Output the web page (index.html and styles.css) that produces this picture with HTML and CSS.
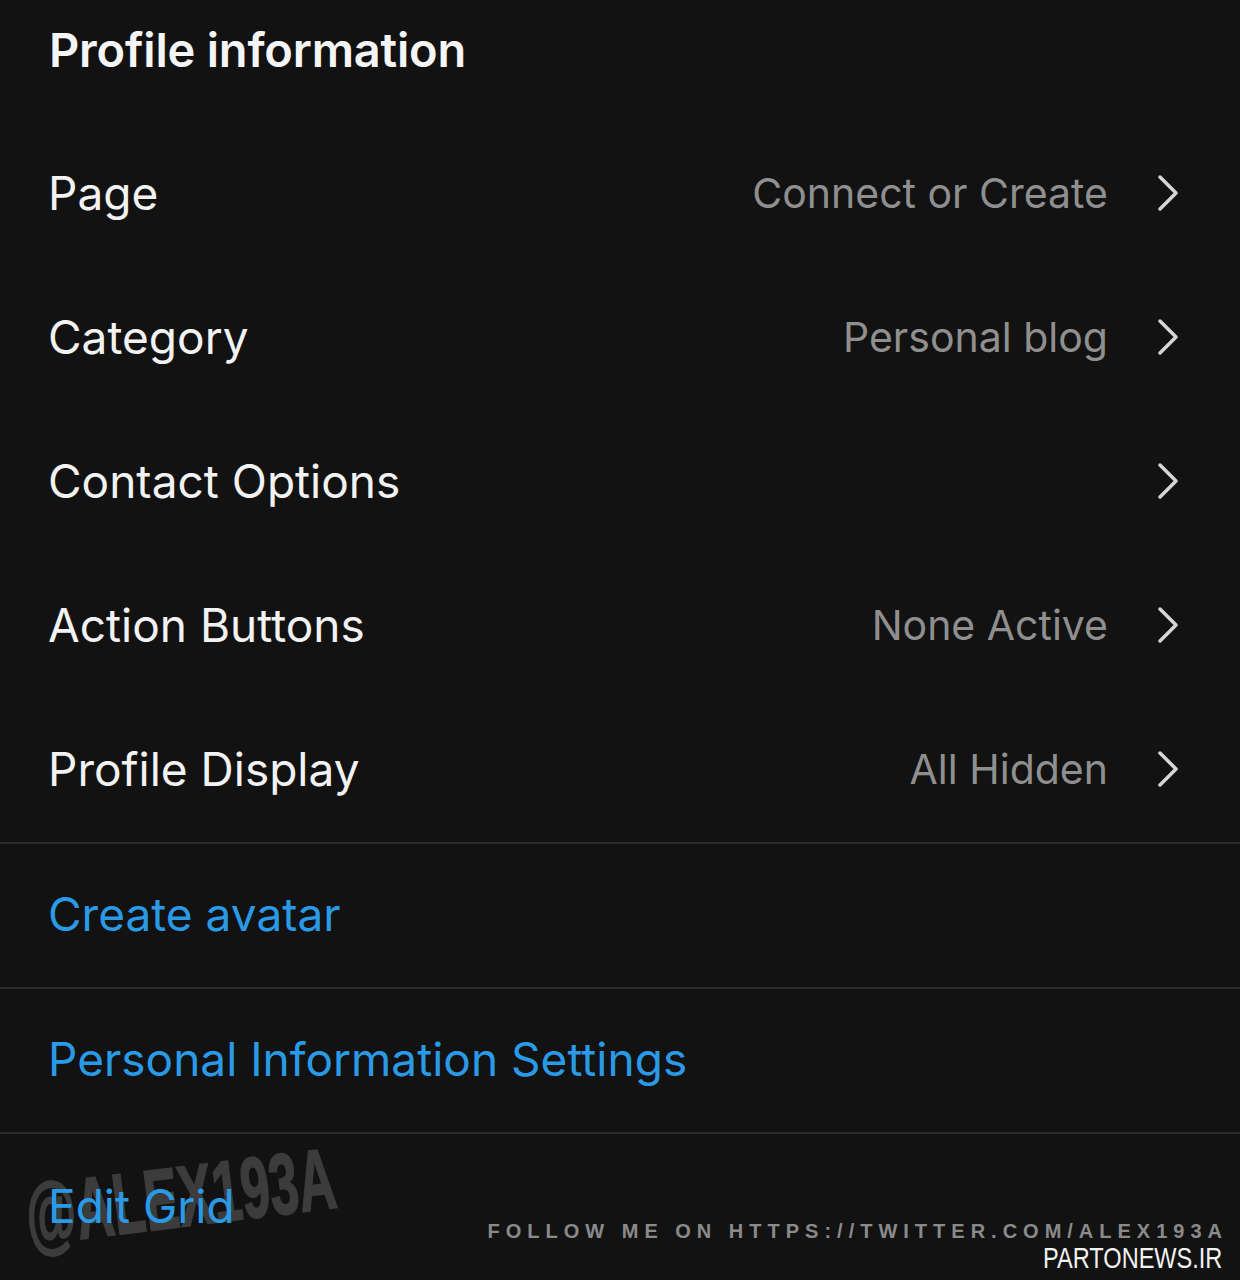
FILE: index.html
```html
<!DOCTYPE html>
<html lang="en">

<head>
    <meta charset="UTF-8">
    <meta name="viewport" content="width=device-width, initial-scale=1.0">
    <title>Profile information</title>
    <link rel="stylesheet" href="styles.css">
</head>

<body>
    <div class="screen">
        <h1 class="title">Profile information</h1>

        <ul class="list">
            <li class="row">
                <span class="label">Page</span>
                <span class="value">Connect or Create</span>
                <svg class="chev" viewBox="0 0 24 40"><path d="M4 4 L20 20 L4 36" /></svg>
            </li>
            <li class="row">
                <span class="label">Category</span>
                <span class="value">Personal blog</span>
                <svg class="chev" viewBox="0 0 24 40"><path d="M4 4 L20 20 L4 36" /></svg>
            </li>
            <li class="row">
                <span class="label">Contact Options</span>
                <span class="value"></span>
                <svg class="chev" viewBox="0 0 24 40"><path d="M4 4 L20 20 L4 36" /></svg>
            </li>
            <li class="row">
                <span class="label">Action Buttons</span>
                <span class="value">None Active</span>
                <svg class="chev" viewBox="0 0 24 40"><path d="M4 4 L20 20 L4 36" /></svg>
            </li>
            <li class="row">
                <span class="label">Profile Display</span>
                <span class="value">All Hidden</span>
                <svg class="chev" viewBox="0 0 24 40"><path d="M4 4 L20 20 L4 36" /></svg>
            </li>
        </ul>

        <ul class="links">
            <li><a href="#">Create avatar</a></li>
            <li><a href="#">Personal Information Settings</a></li>
            <li><a href="#">Edit Grid</a></li>
        </ul>

        <!-- watermark -->
        <div class="mark">@ALEX193A</div>
        <div class="credit">
            <span class="follow">FOLLOW ME ON HTTPS://TWITTER.COM/ALEX193A</span>
            <span class="site">PARTONEWS.IR</span>
        </div>
    </div>
</body>

</html>
```

FILE: styles.css
```css
* {
    margin: 0;
    padding: 0;
    box-sizing: border-box;
}

ul {
    list-style: none;
}

html,
body {
    background-color: #121212;
}

body {
    font-family: Inter, "Noto Sans", sans-serif;
    color: #f2f2f2;
}

.screen {
    position: relative;
    width: 1240px;
    height: 1280px;
    overflow: hidden;
}

.title {
    height: 122px;
    padding: 22px 0 0 49px;
    font-size: 47px;
    font-weight: 600;
    line-height: 56px;
    color: #f5f5f5;
    letter-spacing: -0.2px;
}

.row {
    display: flex;
    align-items: center;
    height: 144px;
    padding: 0 60px 2px 48px;
}

.row:last-child {
    height: 146px;
    border-bottom: 2px solid #2c2c2c;
}

.label {
    flex: 1;
    font-size: 46px;
    color: #f2f2f2;
}

.value {
    font-size: 41px;
    color: #8f8f8f;
    margin-right: 48px;
}

.chev {
    width: 24px;
    height: 40px;
    fill: none;
    stroke: #d6d6d6;
    stroke-width: 3.5;
    stroke-linecap: round;
    stroke-linejoin: round;
}

.links {
    position: relative;
    z-index: 1;
}

.links li {
    display: flex;
    align-items: center;
    height: 145px;
    padding: 0 0 3px 48px;
    border-bottom: 2px solid #2c2c2c;
}

.links li:last-child {
    border-bottom: none;
    height: 144px;
    padding-bottom: 0;
}

.links a {
    font-size: 46px;
    color: #2b9ae6;
    text-decoration: none;
}

.mark {
    position: absolute;
    left: 32px;
    top: 1166px;
    font-family: "Liberation Sans", sans-serif;
    font-weight: 700;
    font-size: 86px;
    color: #3c3c3c;
    -webkit-text-stroke: 2px #3c3c3c;
    transform: rotate(-7deg) scaleX(0.6);
    transform-origin: left bottom;
    z-index: 0;
}

.credit {
    position: absolute;
    right: 18px;
    top: 1220px;
    display: flex;
    flex-direction: column;
    align-items: flex-end;
}

.follow {
    font-family: "Liberation Sans", sans-serif;
    font-size: 20px;
    font-weight: 700;
    letter-spacing: 6px;
    margin-right: -6px;
    color: #8a8a8a;
}

.site {
    font-family: "Liberation Sans", sans-serif;
    font-size: 30px;
    line-height: 30px;
    color: #f2f2f2;
    transform: scaleX(0.785);
    transform-origin: right center;
}
```
